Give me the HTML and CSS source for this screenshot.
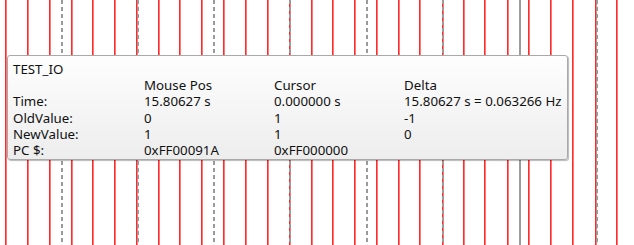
FILE: index.html
```html
<!DOCTYPE html>
<html>
<head>
<meta charset="utf-8">
<link rel="stylesheet" href="styles.css">
</head>
<body>
<div class="scope">
  <div class="edge" style="left:5px"></div>
  <div class="edge" style="left:26.8px"></div>
  <div class="edge" style="left:48.6px"></div>
  <div class="edge" style="left:70.5px"></div>
  <div class="edge" style="left:92.3px"></div>
  <div class="edge" style="left:114.1px"></div>
  <div class="edge" style="left:136.4px"></div>
  <div class="edge" style="left:157.7px"></div>
  <div class="edge" style="left:179.3px"></div>
  <div class="edge" style="left:201.4px"></div>
  <div class="edge" style="left:222.7px"></div>
  <div class="edge" style="left:245px"></div>
  <div class="edge" style="left:266.6px"></div>
  <div class="edge" style="left:289px"></div>
  <div class="edge" style="left:310.5px"></div>
  <div class="edge" style="left:331.7px"></div>
  <div class="edge" style="left:354px"></div>
  <div class="edge" style="left:375.5px"></div>
  <div class="edge" style="left:397.5px"></div>
  <div class="edge" style="left:419.2px"></div>
  <div class="edge" style="left:441.7px"></div>
  <div class="edge" style="left:463px"></div>
  <div class="edge" style="left:484.3px"></div>
  <div class="edge" style="left:506.5px"></div>
  <div class="edge" style="left:527.8px"></div>
  <div class="edge" style="left:550.3px"></div>
  <div class="edge" style="left:571.5px"></div>
  <div class="edge" style="left:594.5px"></div>
  <div class="edge" style="left:615.7px"></div>

  <div class="grid" style="left:61px"></div>
  <div class="grid" style="left:137px"></div>
  <div class="grid" style="left:213px"></div>
  <div class="grid" style="left:289px"></div>
  <div class="grid" style="left:366px"></div>
  <div class="grid" style="left:442px"></div>
  <div class="grid" style="left:596px"></div>
  <div class="cursor" style="left:518.5px"></div>

  <div class="info">
    <div class="title">TEST_IO</div>
    <div class="table">
      <span></span><span>Mouse Pos</span><span>Cursor</span><span>Delta</span>
      <span>Time:</span><span>15.80627 s</span><span>0.000000 s</span><span>15.80627 s = 0.063266 Hz</span>
      <span>OldValue:</span><span>0</span><span>1</span><span>-1</span>
      <span>NewValue:</span><span>1</span><span>1</span><span>0</span>
      <span>PC $:</span><span>0xFF00091A</span><span>0xFF000000</span><span></span>
    </div>
  </div>
</div>
</body>
</html>
```
FILE: styles.css
```css
html, body {
  margin: 0;
  padding: 0;
  background: #ffffff;
}
.scope {
  position: relative;
  width: 634px;
  height: 245px;
  overflow: hidden;
  background: #ffffff;
}
.edge {
  position: absolute;
  top: 0;
  bottom: 0;
  width: 2px;
  background: linear-gradient(to right, #ff2a2a 0 50%, #ff7777 50% 100%);
}
.grid {
  position: absolute;
  top: 0;
  bottom: 0;
  width: 2px;
  background: repeating-linear-gradient(to bottom, #9a9a9a 0 4px, transparent 4px 7px);
}
.cursor {
  position: absolute;
  top: 0;
  bottom: 0;
  width: 2px;
  background: #9c9c9c;
}
.info {
  position: absolute;
  left: 7px;
  top: 55px;
  width: 561px;
  height: 105px;
  box-sizing: border-box;
  border: 1px solid #a9a9a9;
  border-radius: 3px;
  background: linear-gradient(to bottom, #fefefe, #ededed);
  box-shadow: 1px 1px 1px rgba(0, 0, 0, 0.28);
  padding: 5px 0 0 5px;
  font-family: "Noto Sans", "Open Sans", sans-serif;
  font-size: 13.3px;
  line-height: 16.2px;
  color: #111111;
}
.title {
  height: 16.2px;
}
.table {
  display: grid;
  grid-template-columns: 131px 130px 130px auto;
}
.table span {
  white-space: nowrap;
  height: 16.2px;
}
```
